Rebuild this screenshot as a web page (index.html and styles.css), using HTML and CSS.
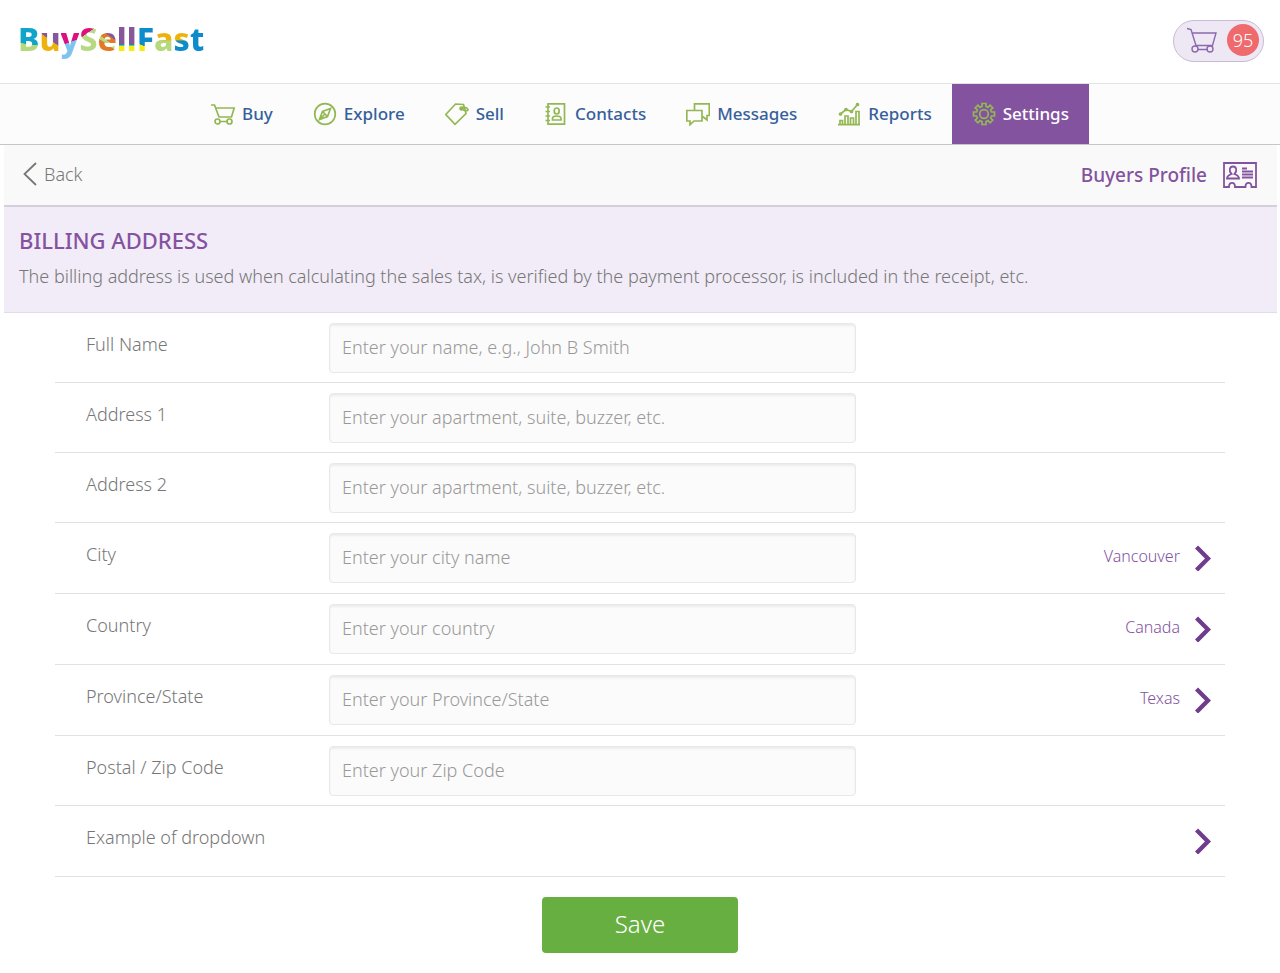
FILE: index.html
```html
<!DOCTYPE html>
<html lang="en">
<head>
<meta charset="utf-8">
<meta name="viewport" content="width=device-width, initial-scale=1">
<title>BuySellFast - Billing Address</title>
<link rel="stylesheet" href="styles.css">
</head>
<body>
<svg class="symbols" aria-hidden="true">
  <symbol id="cart" viewBox="0 0 32 26">
    <path d="M1 1.5L5 2.5L10 18.5H26.500L30 6H6.500M12 22.500H22"/><circle cx="9" cy="22" r="3"/><circle cx="24" cy="22" r="3"/>
  </symbol>
  <symbol id="chevron" viewBox="0 0 16 26">
    <path d="M1.500 2L13 13.500L1.500 25"/>
  </symbol>
</svg>

<header class="header">
  <a class="logo" href="#" aria-label="BuySellFast"><span class="l-b">B</span><span class="l-u">u</span><span class="l-y">y</span><span class="l-s">S</span><span class="l-e">e</span><span class="l-l">l</span><span class="l-l">l</span><span class="l-f">F</span><span class="l-a">a</span><span class="l-s2">s</span><span class="l-t">t</span></a>
  <a class="cart" href="#" aria-label="Cart, 95 items">
    <svg class="cart-icon"><use href="#cart"/></svg>
    <span class="badge">95</span>
  </a>
</header>

<nav class="nav">
  <a class="nav-item" href="#"><svg class="icon" viewBox="0 0 24 24"><path d="M0 3H3.500L8 15H20.500L23.200 6H5M9 19.500H17"/><circle cx="6.500" cy="19.500" r="2.500"/><circle cx="18.500" cy="19.500" r="2.500"/></svg>Buy</a>
  <a class="nav-item" href="#"><svg class="icon" viewBox="0 0 24 24"><circle cx="12" cy="12" r="10.300"/><path d="M17.500 6.500L9.500 9.500L6.500 17.500L14.500 14.500ZM9.500 9.500L14.500 14.500M6.500 17.500L12.500 11.500"/></svg>Explore</a>
  <a class="nav-item" href="#"><svg class="icon" viewBox="0 0 24 24"><path d="M.8 12.500L10.500 2L18.500 2.500L21 11.500L10 22.300Z"/><circle class="solid" cx="16.500" cy="6.500" r="1.500"/><path d="M16 7C17 4.500 22 5 23 7.500C23.500 9.500 19 9 16.500 6.500"/></svg>Sell</a>
  <a class="nav-item" href="#"><svg class="icon" viewBox="0 0 24 24"><path d="M4 1.800H20.500V22.200H4ZM1.500 5H6M1.500 9.500H6M1.500 14H6M1.500 18.500H6M8.500 18V16.500C8.500 14.500 10 14 12.500 14S17 14.500 17 16.500V18Z"/><ellipse cx="12.700" cy="9" rx="2.500" ry="3"/></svg>Contacts</a>
  <a class="nav-item" href="#"><svg class="icon" viewBox="0 0 24 24"><path d="M8.500 8.500V1.800H23.300V13.500H21V18L16 14M.8 8.500H16V19H8L4 22.800V19H.8Z"/></svg>Messages</a>
  <a class="nav-item" href="#"><svg class="icon" viewBox="0 0 24 24"><path d="M1 22.700H23M3 22V18.500H5.500V22M8 22V14H11V22M13.500 22V16H16.500V22M19 22V9.500H22V22M3.500 12L9 7.500L14.500 9.500L20.500 2.500"/><circle class="solid" cx="3.500" cy="12" r="1"/><circle class="solid" cx="9" cy="7.500" r="1"/><circle class="solid" cx="14.500" cy="9.500" r="1"/><circle class="solid" cx="20.500" cy="2.500" r="1"/></svg>Reports</a>
  <a class="nav-item active" href="#" aria-current="page"><svg class="icon" viewBox="0 0 24 24"><path d="M10 1.500H14V4.500L16 5.400L18.100 3.200L20.800 5.900L18.600 8L19.500 10H22.500V14H19.500L18.600 16L20.800 18.100L18.100 20.800L16 18.600L14 19.500V22.500H10V19.500L8 18.600L5.900 20.800L3.200 18.100L5.400 16L4.500 14H1.500V10H4.500L5.400 8L3.200 5.900L5.900 3.200L8 5.400L10 4.500Z"/><circle cx="12" cy="12" r="4.300"/></svg>Settings</a>
</nav>

<main class="main">
  <div class="toolbar">
    <a class="back" href="#"><svg class="back-icon" viewBox="0 0 14 24"><path d="M13 1L1.500 12L13 23"/></svg>Back</a>
    <a class="profile" href="#">Buyers Profile
      <svg class="profile-icon" viewBox="0 0 34 26"><path d="M1 1H33V25H28.500C28.500 19.500 22.500 19.500 22.500 25H12C12 19.500 6 19.500 6 25H1Z"/><path d="M4 16.500C4 13.500 6 13 8.500 12C5.500 9 6.500 4.500 10 4.500S14.500 9 11.500 12C14 13 16 13.500 16 16.500Z"/><path d="M19 6.500H24M19 9.500H30M19 12.500H30M19 15.500H30"/></svg>
    </a>
  </div>
  <section class="banner">
    <h1 class="title">BILLING ADDRESS</h1>
    <p class="intro">The billing address is used when calculating the sales tax, is verified by the payment processor, is included in the receipt, etc.</p>
  </section>

  <form class="form">
    <div class="row"><label class="label" for="name">Full Name</label><input class="input" id="name" placeholder="Enter your name, e.g., John B Smith"></div>
    <div class="row"><label class="label" for="address1">Address 1</label><input class="input" id="address1" placeholder="Enter your apartment, suite, buzzer, etc."></div>
    <div class="row"><label class="label" for="address2">Address 2</label><input class="input" id="address2" placeholder="Enter your apartment, suite, buzzer, etc."></div>
    <div class="row tall"><label class="label" for="city">City</label><input class="input" id="city" placeholder="Enter your city name"><button class="pick" type="button">Vancouver<svg class="chevron"><use href="#chevron"/></svg></button></div>
    <div class="row tall"><label class="label" for="country">Country</label><input class="input" id="country" placeholder="Enter your country"><button class="pick" type="button">Canada<svg class="chevron"><use href="#chevron"/></svg></button></div>
    <div class="row tall"><label class="label" for="state">Province/State</label><input class="input" id="state" placeholder="Enter your Province/State"><button class="pick" type="button">Texas<svg class="chevron"><use href="#chevron"/></svg></button></div>
    <div class="row"><label class="label" for="zip">Postal / Zip Code</label><input class="input" id="zip" placeholder="Enter your Zip Code"></div>
    <div class="row tall"><label class="label" for="example">Example of dropdown</label><button class="pick" id="example" type="button" aria-haspopup="listbox"><svg class="chevron"><use href="#chevron"/></svg></button></div>
    <button class="save" type="submit">Save</button>
  </form>
</main>
</body>
</html>
```
FILE: styles.css
```css
* { box-sizing: border-box; }
body {
  margin: 0;
  background: #fff;
  color: #777;
  font: 300 18px/24px "Noto Sans", "Open Sans", sans-serif;
}
a { color: inherit; text-decoration: none; }
svg { fill: none; stroke: currentColor; flex: none; }
.symbols { display: none; }

.header {
  display: flex;
  align-items: center;
  justify-content: space-between;
  height: 84px;
  padding: 0 16px 2px 18px;
  border-bottom: 1px solid #e3e3e3;
}
.logo {
  display: flex;
  padding-bottom: 4px;
  font: 800 32px/42px "Noto Sans", "Open Sans", sans-serif;
}
.logo span { color: transparent; background-clip: text; -webkit-background-clip: text; }
.logo .l-b { background-image: linear-gradient(8deg, #b5d97c 38%, #0fa5cb 39%); }
.logo .l-u { background-image: linear-gradient(35deg, #edb30d 48%, #86589b 49%); }
.logo .l-y { background-image: linear-gradient(160deg, #dc107e 56%, #7fc3ef 57%); }
.logo .l-s { background-image: linear-gradient(145deg, #dc107e 38%, #b7d982 39%); }
.logo .l-e { background-image: linear-gradient(35deg, #e57825 40%, #b5d97c 41%, #b5d97c 47%, #e57825 48%, #e57825 58%, #86589b 59%); }
.logo .l-l { background-image: linear-gradient(0deg, #f7ed0c 34%, #0d8ccc 35%, #0d8ccc 38%, #86589b 39%); }
.logo .l-f { background-image: linear-gradient(20deg, #f7ed0c 34%, #0d8ccc 35%); }
.logo .l-a { background-image: linear-gradient(0deg, #b5d97c 46%, #edb30d 47%); }
.logo .l-s2 { background-image: linear-gradient(0deg, #0d8ccc 46%, #edb30d 47%); }
.logo .l-t { background-image: linear-gradient(0deg, #0d8ccc, #0d8ccc); }

.cart {
  display: flex;
  align-items: center;
  gap: 9px;
  height: 42px;
  padding: 0 4px 2px 12px;
  border: 1px solid #c9bbd8;
  border-radius: 21px;
  background: #eee8f4;
  color: #8d68ae;
}
.cart-icon { width: 32px; height: 26px; stroke-width: 1.4; }
.badge {
  width: 32px;
  border-radius: 50%;
  background: #ee6a6c;
  color: #fff;
  font-size: 18px;
  line-height: 32px;
  text-align: center;
}

.nav {
  display: flex;
  justify-content: center;
  height: 61px;
  background: #fcfcfc;
  border-bottom: 1px solid #c6c6c6;
  color: #36609b;
  font-size: 17px;
  font-weight: 500;
}
.nav-item {
  display: flex;
  align-items: center;
  gap: 7px;
  padding: 0 20px;
}
.nav-item.active { background: #84539f; color: #fff; }
.icon { width: 24px; height: 24px; color: #93b853; stroke-width: 1.7; }
.solid { fill: currentColor; }

.main { margin: 0 3px 0 4px; }
.toolbar {
  display: flex;
  align-items: center;
  justify-content: space-between;
  height: 62px;
  padding: 0 20px 0 19px;
  background: #f9f9f9;
  border-bottom: 2px solid #d5cedd;
}
.back { display: flex; align-items: center; gap: 7px; padding-bottom: 2px; }
.back-icon { width: 14px; height: 24px; stroke-width: 1.8; }
.profile {
  display: flex;
  align-items: center;
  gap: 16px;
  color: #84539f;
  font-size: 19px;
  font-weight: 500;
}
.profile-icon { width: 34px; height: 26px; stroke-width: 1.8; }

.banner {
  padding: 17px 15px 24px;
  background: #f2ecf8;
  border-bottom: 1px solid #e2dce8;
}
.title {
  margin: 0 0 8px;
  color: #84539f;
  font-size: 22px;
  font-weight: 500;
  line-height: 32px;
}
.intro { margin: 0; }

.form {
  display: flex;
  flex-direction: column;
  margin: 0 52px 20px 51px;
}
.row {
  display: flex;
  align-items: center;
  min-height: 70px;
  padding: 0 14px 0 31px;
  border-bottom: 1px solid #e2e2e2;
}
.row.tall { min-height: 71px; }
.label { flex: none; width: 243px; padding-bottom: 8px; }
.input {
  flex: 0 1 527px;
  min-width: 0;
  height: 50px;
  padding: 0 12px 2px;
  border: 1px solid #e8e8e8;
  border-radius: 4px;
  background: #fbfbfb;
  box-shadow: inset 0 2px 2px #ececec;
  color: #777;
  font: inherit;
}
.input::placeholder { color: #999; opacity: 1; }
.pick {
  display: flex;
  align-items: flex-start;
  gap: 15px;
  margin-left: auto;
  padding: 0;
  border: 0;
  background: none;
  color: #84539f;
  font: inherit;
  font-size: 16px;
  line-height: 22px;
}
.chevron { width: 16px; height: 26px; color: #6f3d8b; stroke-width: 4.4; }
.save {
  align-self: center;
  width: 196px;
  height: 56px;
  margin-top: 20px;
  padding: 0 0 2px;
  border: 0;
  border-radius: 4px;
  background: #67af41;
  color: #fff;
  font: inherit;
  font-size: 24px;
}
```
